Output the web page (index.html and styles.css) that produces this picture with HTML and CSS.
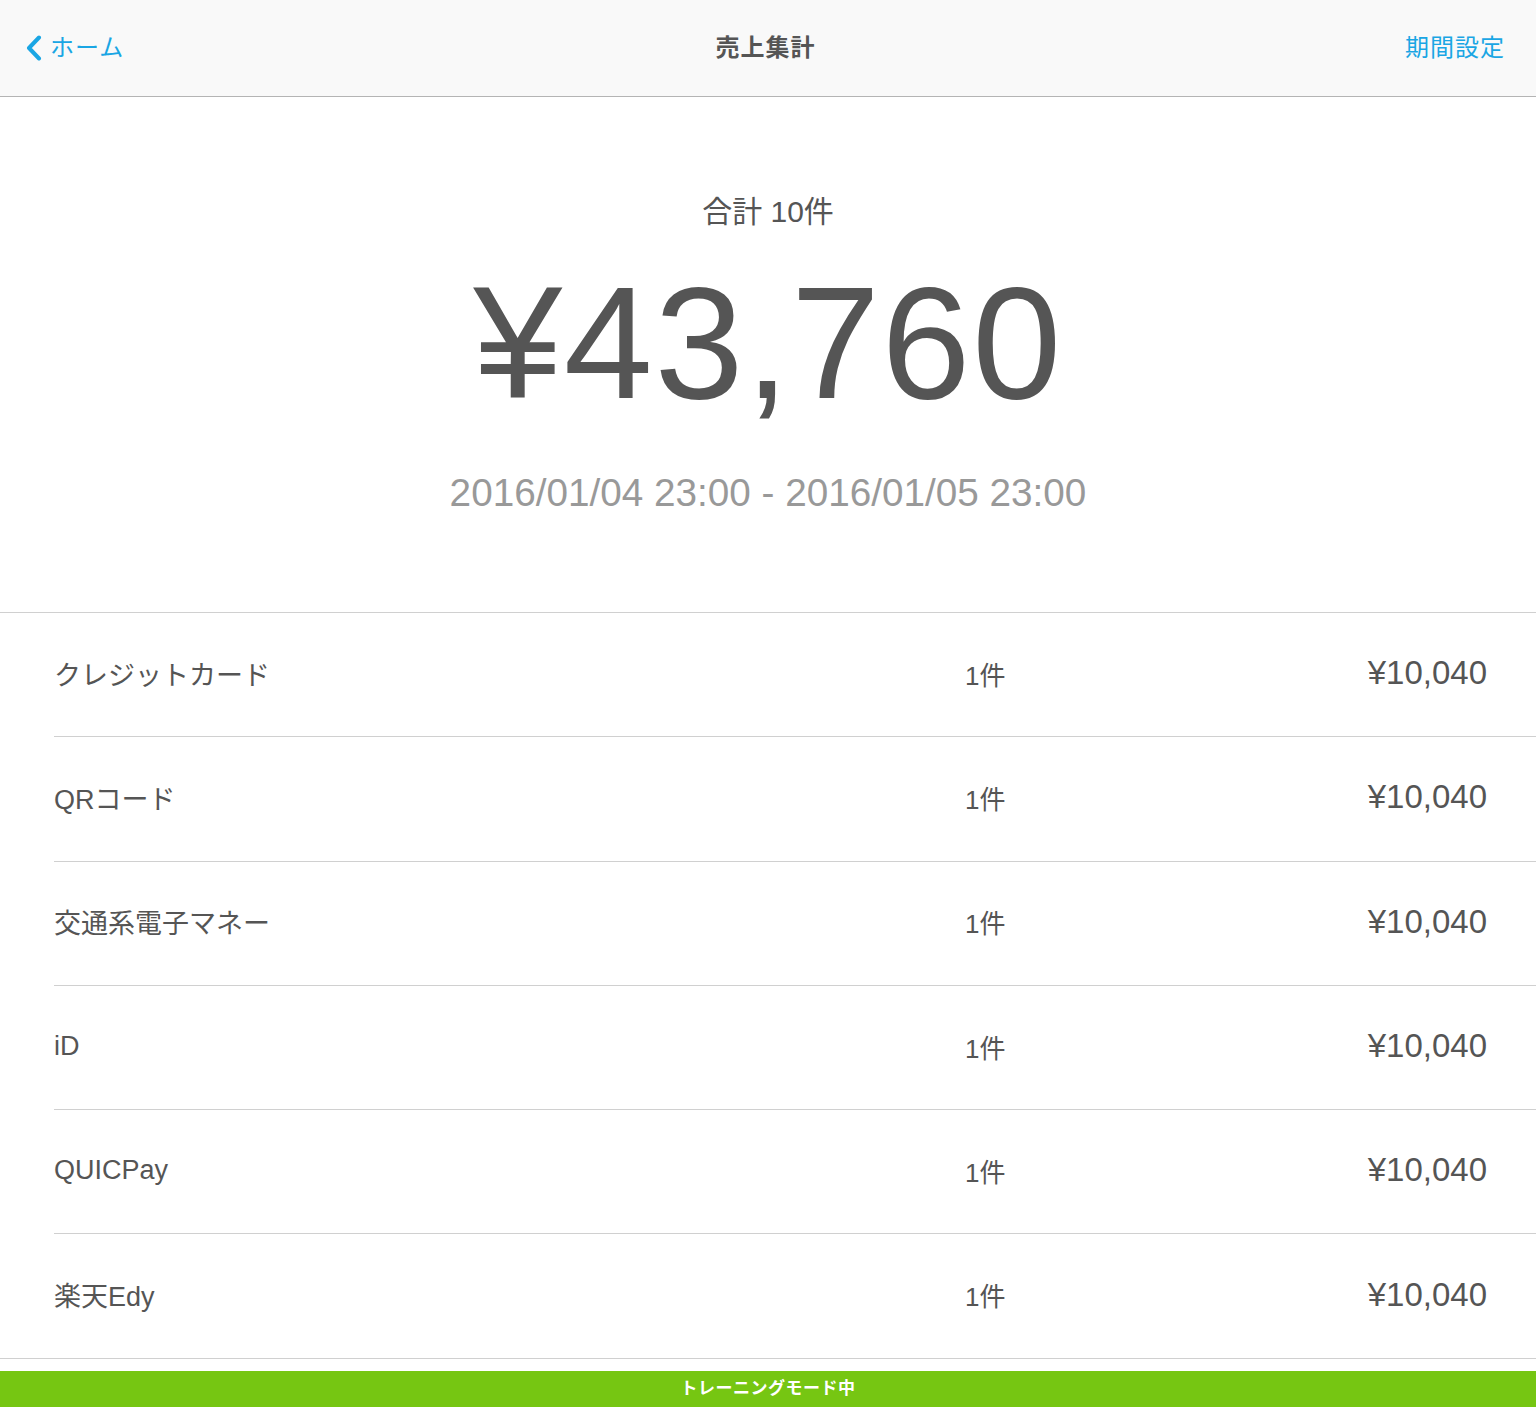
FILE: index.html
```html
<!DOCTYPE html>
<html lang="ja">
<head>
<meta charset="utf-8">
<title>売上集計</title>
<link rel="stylesheet" href="styles.css">
</head>
<body>
<header class="navbar">
  <a class="nav-back">
    <svg class="chevron" width="16" height="26" viewBox="0 0 16 26"><polyline points="13,2.5 3,13 13,23.5" fill="none" stroke="#1aa6e4" stroke-width="4" stroke-linecap="round" stroke-linejoin="round"/></svg>
    <span>ホーム</span>
  </a>
  <h1 class="nav-title">売上集計</h1>
  <a class="nav-action">期間設定</a>
</header>

<section class="summary">
  <div class="summary-count">合計 10件</div>
  <div class="summary-amount">¥43,760</div>
  <div class="summary-period">2016/01/04 23:00 - 2016/01/05 23:00</div>
</section>

<ul class="list">
  <li class="row"><span class="label">クレジットカード</span><span class="count">1件</span><span class="amount">¥10,040</span></li>
  <li class="row"><span class="label">QRコード</span><span class="count">1件</span><span class="amount">¥10,040</span></li>
  <li class="row"><span class="label">交通系電子マネー</span><span class="count">1件</span><span class="amount">¥10,040</span></li>
  <li class="row"><span class="label">iD</span><span class="count">1件</span><span class="amount">¥10,040</span></li>
  <li class="row"><span class="label">QUICPay</span><span class="count">1件</span><span class="amount">¥10,040</span></li>
  <li class="row"><span class="label">楽天Edy</span><span class="count">1件</span><span class="amount">¥10,040</span></li>
</ul>

<footer class="training">トレーニングモード中</footer>
</body>
</html>
```

FILE: styles.css
```css
* { box-sizing: border-box; }
html, body { margin: 0; padding: 0; }
body {
  width: 1536px;
  background: #ffffff;
  font-family: "Liberation Sans", "Noto Sans CJK JP", sans-serif;
  color: #555555;
}

.navbar {
  height: 97px;
  background: #f9f9f9;
  border-bottom: 1px solid #b4b4b4;
  display: grid;
  grid-template-columns: 1fr auto 1fr;
  align-items: center;
  padding: 0 31px 0 26px;
}
.nav-back {
  display: flex;
  align-items: center;
  gap: 8px;
  color: #1aa6e4;
  font-size: 24px;
  line-height: 30px;
  letter-spacing: 1px;
  justify-self: start;
}
.chevron { display: block; }
.nav-title {
  margin: 0;
  font-size: 24px;
  font-weight: bold;
  line-height: 30px;
  color: #555555;
  letter-spacing: 1px;
}
.nav-action {
  justify-self: end;
  color: #1aa6e4;
  font-size: 24px;
  line-height: 30px;
  letter-spacing: 1px;
}

.summary {
  display: flex;
  flex-direction: column;
  align-items: center;
  padding: 95px 0 96px;
  border-bottom: 1px solid #d0d0d0;
}
.summary-count {
  font-size: 30px;
  line-height: 40px;
  color: #555555;
}
.summary-amount {
  margin-top: 31px;
  font-size: 160px;
  line-height: 160px;
  letter-spacing: 1.6px;
  color: #555555;
}
.summary-period {
  margin-top: 47px;
  font-size: 38.7px;
  line-height: 46px;
  color: #999999;
}

.list {
  list-style: none;
  margin: 0;
  padding: 0;
}
.row {
  height: 124.3px;
  margin-left: 54px;
  padding-right: 49px;
  padding-bottom: 3px;
  border-bottom: 1px solid #d0d0d0;
  display: grid;
  grid-template-columns: 911px 1fr auto;
  align-items: center;
}
.row:last-child {
  margin-left: 0;
  padding-left: 54px;
}
.label {
  font-size: 27px;
  color: #555555;
}
.count {
  font-size: 26px;
  color: #555555;
}
.amount {
  font-size: 33px;
  color: #555555;
}

.training {
  margin-top: 12px;
  height: 36px;
  background: #76c612;
  color: #ffffff;
  font-size: 17px;
  font-weight: bold;
  line-height: 36px;
  text-align: center;
  letter-spacing: 0.5px;
}
```
